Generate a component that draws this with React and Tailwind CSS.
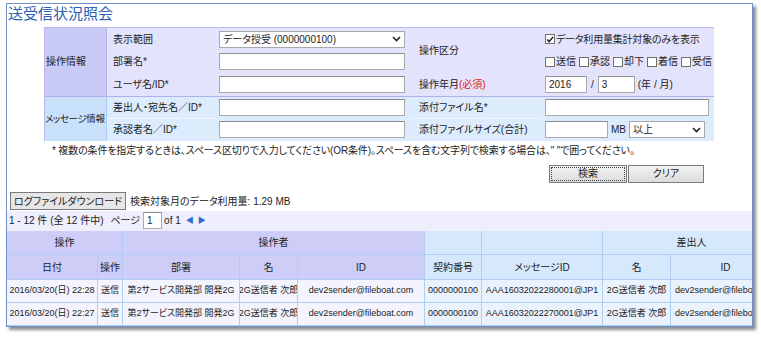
import React from 'react';

const Box = ({ checked }) => (
    <span className="inline-flex items-center justify-center w-[10px] h-[10px] border border-[#707070] bg-white mr-px align-middle">
        {checked && (
            <svg width="9" height="9" viewBox="0 0 9 9">
                <path d="M1.5 4.5 L3.5 7 L8 1.5" fill="none" stroke="#111" strokeWidth="1.6" />
            </svg>
        )}
    </span>
);

const Input = ({ className = '', value = '' }) => (
    <div className={`h-[17px] border border-[#a9a9a9] border-t-[#8c8c8c] bg-white flex items-center px-[3px] ${className}`}>
        {value}
    </div>
);

const Select = ({ className = '', value }) => (
    <div className={`h-[17px] border border-[#a9a9a9] bg-white flex items-center justify-between px-[3px] ${className}`}>
        <span>{value}</span>
        <svg width="9" height="6" viewBox="0 0 9 6">
            <path d="M1 1 L4.5 4.5 L8 1" fill="none" stroke="#222" strokeWidth="1.6" />
        </svg>
    </div>
);

const Btn = ({ children, className = '' }) => (
    <div className={`h-[18px] flex items-center justify-center border border-[#7a7a7a] bg-gradient-to-b from-[#f2f2f2] to-[#dcdcdc] text-[#222] ${className}`}>
        {children}
    </div>
);

const cols = [
    { w: 'w-[91px]' }, { w: 'w-[25px]' }, { w: 'w-[117px]' }, { w: 'w-[58px]' }, { w: 'w-[127px]' },
    { w: 'w-[57px]' }, { w: 'w-[121px]' }, { w: 'w-[68px]' }, { w: 'w-[110px]' },
];

const rows = [
    ['2016/03/20(日) 22:28', '送信', '第2サービス開発部 開発2G', '2G送信者 次郎', 'dev2sender@fileboat.com', '0000000100', 'AAA16032022280001@JP1', '2G送信者 次郎', 'dev2sender@fileboat.com'],
    ['2016/03/20(日) 22:27', '送信', '第2サービス開発部 開発2G', '2G送信者 次郎', 'dev2sender@fileboat.com', '0000000100', 'AAA16032022270001@JP1', '2G送信者 次郎', 'dev2sender@fileboat.com'],
];

export default function App() {
    const lav = 'bg-[#cdcdf7]';
    const blu = 'bg-[#d6e9fc]';
    const cell = 'border-r border-b border-[#aecdf0] flex items-center justify-center whitespace-nowrap overflow-hidden shrink-0';

    return (
        <div className="w-[761px] h-[337px] bg-white text-[10px] text-[#222] [font-family:'Liberation_Sans','Noto_Sans_CJK_JP',sans-serif] [font-feature-settings:'palt'] pt-[3px] pl-[6px]">
            <div className="w-[747px] h-[324px] border border-[#6d90c8] bg-white shadow-[3px_3px_3px_rgba(0,0,0,0.45)] overflow-hidden flex flex-col">
                {/* Title */}
                <div className="h-[26px] pl-[1px] pt-[1px] text-[15px] leading-[18px] text-[#2c60b2]">送受信状況照会</div>

                {/* Search form */}
                <div className="ml-[37px] w-[670px] border-t border-l border-[#b9b9ef]">
                    <div className="grid grid-cols-[62px_108px_196px_130px_173px] grid-rows-[23px_22px_23px] bg-[#e3e3fc]">
                        <div className="row-span-3 bg-[#cacaf6] border-r border-[#b4b4ec] flex items-center pl-[1px]">操作情報</div>
                        <div className="flex items-center pl-[6px]">表示範囲</div>
                        <div className="flex items-center pl-[4px]"><Select className="w-[186px]" value="データ授受 (0000000100)" /></div>
                        <div className="row-span-2 flex items-center pl-[8px]">操作区分</div>
                        <div className="flex items-center pl-[4px] tracking-[-0.2px]"><Box checked />データ利用量集計対象のみを表示</div>
                        <div className="flex items-center pl-[6px]">部署名*</div>
                        <div className="flex items-center pl-[4px]"><Input className="w-[186px]" /></div>
                        <div className="flex items-center pl-[4px] gap-[3px]">
                            <span className="flex items-center"><Box />送信</span>
                            <span className="flex items-center"><Box />承認</span>
                            <span className="flex items-center"><Box />却下</span>
                            <span className="flex items-center"><Box />着信</span>
                            <span className="flex items-center"><Box />受信</span>
                        </div>
                        <div className="flex items-center pl-[6px]">ユーザ名/ID*</div>
                        <div className="flex items-center pl-[4px]"><Input className="w-[186px]" /></div>
                        <div className="flex items-center pl-[8px]">操作年月<span className="text-[#e02020]">(必須)</span></div>
                        <div className="flex items-center pl-[4px]">
                            <Input className="w-[42px]" value="2016" />
                            <span className="px-[4px]">/</span>
                            <Input className="w-[37px]" value="3" />
                            <span className="pl-[3px]">(年 / 月)</span>
                        </div>
                    </div>
                    <div className="grid grid-cols-[62px_108px_196px_130px_173px] grid-rows-[22px_22px] bg-[#dcecfd] border-t border-[#b0b0ea]">
                        <div className="row-span-2 bg-[#c8e0fa] border-r border-[#a9ccf2] flex items-center whitespace-nowrap text-[9.5px] tracking-[-0.4px]">メッセージ情報</div>
                        <div className="flex items-center pl-[6px] border-b border-[#eef6ff]">差出人・宛先名／ID*</div>
                        <div className="flex items-center pl-[4px]"><Input className="w-[186px]" /></div>
                        <div className="flex items-center pl-[8px] border-b border-[#eef6ff]">添付ファイル名*</div>
                        <div className="flex items-center pl-[4px]"><Input className="w-[164px]" /></div>
                        <div className="flex items-center pl-[6px]">承認者名／ID*</div>
                        <div className="flex items-center pl-[4px]"><Input className="w-[186px]" /></div>
                        <div className="flex items-center pl-[8px]">添付ファイルサイズ(合計)</div>
                        <div className="flex items-center pl-[4px]">
                            <Input className="w-[63px]" />
                            <span className="px-[3px]">MB</span>
                            <Select className="w-[76px]" value="以上" />
                        </div>
                    </div>
                </div>

                <div className="ml-[45px] mt-[3px] h-[14px] leading-[14px] tracking-[-0.15px]">* 複数の条件を指定するときは、スペース区切りで入力してください(OR条件)。スペースを含む文字列で検索する場合は、" "で囲ってください。</div>

                <div className="flex justify-end gap-px pr-[48px] mt-[7px]">
                    <Btn className="w-[78px] outline-1 outline-dotted outline-[#444] -outline-offset-3">検索</Btn>
                    <Btn className="w-[76px]">クリア</Btn>
                </div>

                <div className="flex items-center mt-[11px] pl-[3px] h-[15px]">
                    <Btn className="h-[15px] px-[3px] !bg-none bg-[#e6e6e6]">ログファイルダウンロード</Btn>
                    <span className="pl-[4px]">検索対象月のデータ利用量: 1.29 MB</span>
                </div>

                <div className="mt-[2px] h-[23px] bg-[#eeeefc] flex items-center pl-[2px]">
                    <span>1 - 12 件 (全 12 件中)</span>
                    <span className="pl-[7px]">ページ</span>
                    <Input className="w-[19px] h-[14px] ml-[3px] text-[10px]" value="1" />
                    <span className="pl-[2px]">of 1</span>
                    <span className="pl-[5px] text-[#2f6bd0] text-[8px]">◀</span>
                    <span className="pl-[4px] text-[#2f6bd0] text-[8px]">▶</span>
                </div>

                {/* Result table */}
                <div className="flex flex-col">
                    <div className="flex h-[24px]">
                        <div className={`${cell} ${lav} w-[116px]`}>操作</div>
                        <div className={`${cell} ${lav} w-[302px]`}>操作者</div>
                        <div className={`${cell} ${blu} w-[57px]`}></div>
                        <div className={`${cell} ${blu} w-[121px]`}></div>
                        <div className={`${cell} ${blu} w-[178px]`}>差出人</div>
                    </div>
                    <div className="flex h-[25px]">
                        {['日付', '操作', '部署', '名', 'ID', '契約番号', 'メッセージID', '名', 'ID'].map((h, i) => (
                            <div key={i} className={`${cell} ${i < 5 ? lav : blu} ${cols[i].w}`}>{h}</div>
                        ))}
                    </div>
                    {rows.map((r, ri) => (
                        <div key={ri} className="flex h-[23px] text-[9px]">
                            {r.map((v, i) => (
                                <div key={i} className={`${cell} ${i < 5 ? 'bg-[#f4f4fe]' : 'bg-[#eaf3fd]'} ${cols[i].w} ${i === 8 ? '!justify-start pl-[4px]' : ''}`}>{v}</div>
                            ))}
                        </div>
                    ))}
                </div>
            </div>
        </div>
    );
}
